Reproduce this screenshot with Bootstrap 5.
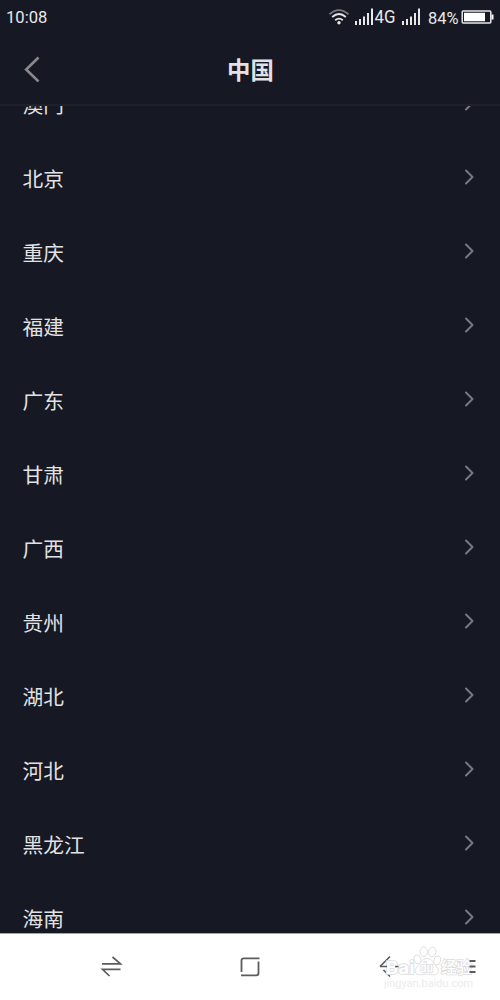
<!DOCTYPE html>
<html lang="zh-CN">
<head>
<meta charset="utf-8">
<meta name="viewport" content="width=device-width, initial-scale=1">
<title>中国</title>
<link href="https://cdn.jsdelivr.net/npm/bootstrap@5.3.0/dist/css/bootstrap.min.css" rel="stylesheet">
<style>
body{background:#161823;color:#e2e2e4;font-family:Roboto,"Noto Sans CJK SC",sans-serif}
svg{display:block;fill:none;flex:none}
.screen{height:1000px;width:500px}
.status{height:35px;padding:0 6px;font-size:16.6px;line-height:35px;color:#e8e8ea}
.topbar{height:71px;padding:0 24px;border-bottom:2px solid #1f202a}
.topbar h1{font-size:23.4px;line-height:34px;font-weight:700;padding:3px 0 0 1px}
.side{width:16px}
.topbar svg{margin-top:-1px}
.regions{min-height:0}
.regions ul{margin-top:-40px}
.region{height:74px;padding:0 26px 0 22.5px;font-size:20.7px;line-height:30px}
.region span{padding-top:5px}
.region svg{stroke:#777981;stroke-width:2;stroke-linecap:round;stroke-linejoin:round}
.softkeys{height:67px;background:#fff;border-top:1px solid #a5a5ab}
.softkeys svg{stroke:#5c5c5c}
</style>
</head>
<body>
<div class="screen d-flex flex-column overflow-hidden">
  <div class="status d-flex justify-content-between align-items-center flex-shrink-0">
    <span>10:08</span>
    <svg width="168" height="35" viewBox="326 0 168 35" stroke="#e8e8ea" role="img" aria-label="4G 84%">
      <g stroke-width="1.8">
        <path d="M329.5 14.2Q339 6 348.5 14.2" stroke="#777982"/>
        <path d="M332.2 17Q339 11 345.8 17M335.2 20.2Q339 17 342.8 20.2"/>
      </g>
      <circle cx="339" cy="22.7" r="1.7" fill="#e8e8ea" stroke="none"/>
      <path stroke-width="2" d="M356 25v-4M360 25v-6M364 25v-8.500M368 25v-12M372 25V8.500M403 25v-4M407 25v-6M411 25v-8.500M415 25v-12M419 25V8.500"/>
      <g fill="#e8e8ea" stroke="none" font-size="17">
        <text x="374.500" y="23" font-size="18" textLength="21" lengthAdjust="spacingAndGlyphs">4G</text>
        <text x="428" y="23.700" textLength="30.500" lengthAdjust="spacingAndGlyphs">84%</text>
      </g>
      <rect x="462.200" y="11" width="28.600" height="12" rx="1" stroke-width="1.500"/>
      <path d="M464 12.800h21v8.400h-21zM491.500 14.500h2v5h-2z" fill="#fff" stroke="none"/>
    </svg>
  </div>
  <header class="topbar d-flex justify-content-between align-items-center flex-shrink-0">
    <svg class="side" width="16" height="26" viewBox="0 0 16 26" stroke="#89898d" stroke-width="2.600"><path d="M14.500 1.500L2.200 13.500L14.500 25.500"/></svg>
    <h1 class="m-0">中国</h1>
    <span class="side"></span>
  </header>
  <main class="regions flex-grow-1 overflow-hidden">
    <ul class="list-unstyled mb-0" id="regionList"></ul>
  </main>
  <nav class="softkeys flex-shrink-0">
    <svg width="500" height="66" viewBox="0 934 500 66">
      <path stroke-width="1.700" d="M102 963.800h18.500L112.500 957M120.500 969.300H102.500L109.500 976"/>
      <path stroke-width="1.800" d="M241.500 972V960.500q0-2.200 2.200-2.200H259.500M258.500 961.500V973q0 2.300-2.300 2.300H241"/>
      <path stroke-width="1.700" d="M390 956.500L380 966.500M383.500 970L390 976.500"/>
      <g fill="#fff" stroke="#dcdcdc" stroke-width=".9">
        <ellipse cx="417.500" cy="959.500" rx="3.300" ry="4.600" transform="rotate(-15 417.500 959.500)"/>
        <ellipse cx="423.700" cy="951.700" rx="3.700" ry="5"/>
        <ellipse cx="432.300" cy="952" rx="3.700" ry="5" transform="rotate(10 432.300 952)"/>
        <ellipse cx="437.200" cy="960.500" rx="3.300" ry="4.600" transform="rotate(15 437.200 960.500)"/>
        <path d="M427 958.500C433 958.500 433 964 437 967C441 972 437 976 432 974.500Q427 973.500 422 974.500C416 976 413 972 417 967C421 964 421 958.500 427 958.500Z"/>
        <g paint-order="stroke" stroke-width="1.600" font-weight="500">
          <text x="385.500" y="973.500" font-size="18.500" font-weight="700" textLength="29" lengthAdjust="spacingAndGlyphs">Bai</text>
          <text x="420" y="972" font-size="12" textLength="13" lengthAdjust="spacingAndGlyphs">du</text>
          <text x="441" y="973" font-size="15.500" textLength="31">经验</text>
        </g>
      </g>
      <path stroke-width="1.700" d="M380 966.500h7M395 966.500h3.500"/>
      <path stroke-width="1.800" d="M469.500 961h6M469.500 966.500h6M469.500 972h6"/>
      <text x="384" y="986.500" fill="#ebebeb" stroke="none" font-size="11.500" textLength="89" lengthAdjust="spacingAndGlyphs">jingyan.baidu.com</text>
    </svg>
  </nav>
</div>
<script src="https://cdn.jsdelivr.net/npm/bootstrap@5.3.0/dist/js/bootstrap.bundle.min.js"></script>
<script>
const names = ["澳门","北京","重庆","福建","广东","甘肃","广西","贵州","湖北","河北","黑龙江","海南"];
document.getElementById("regionList").innerHTML = names.map(name =>
  `<li class="region d-flex justify-content-between align-items-center"><span>${name}</span><svg width="10" height="16" viewBox="0 0 10 16"><path d="M2 1.500L8.500 8L2 14.500"/></svg></li>`).join("");
</script>
</body>
</html>
